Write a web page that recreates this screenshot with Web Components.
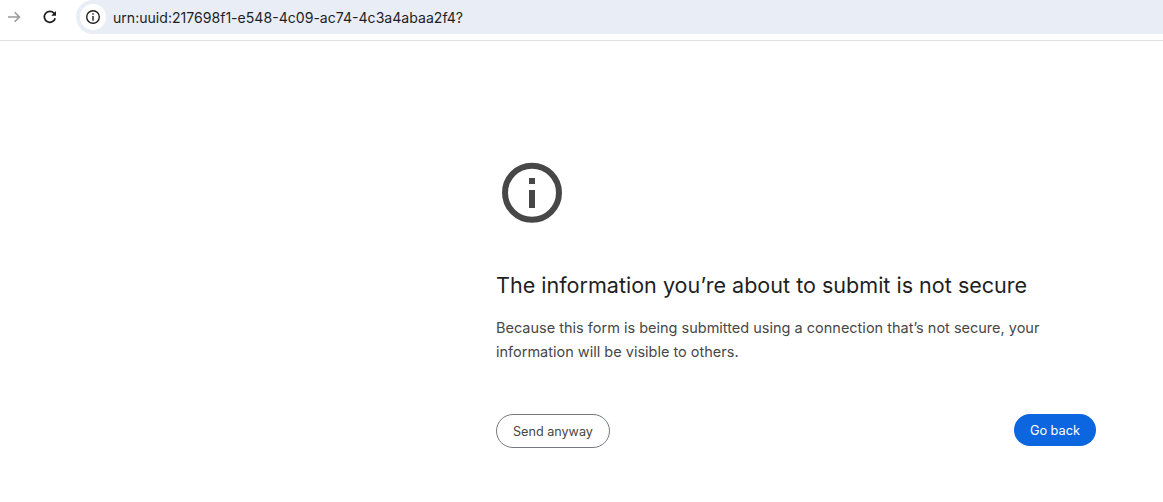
<!DOCTYPE html>
<html>
<head>
<meta charset="utf-8">
<title>Not secure</title>
<style>
  html,body{margin:0;padding:0;background:#fff;height:100%;overflow:hidden;}
  body{font-family:Inter,"Liberation Sans",sans-serif;}
</style>
</head>
<body>
<browser-toolbar url="urn:uuid:217698f1-e548-4c09-ac74-4c3a4abaa2f4?"></browser-toolbar>
<warning-page>
  <span slot="title">The information you’re about to submit is not secure</span>
  <span slot="text">Because this form is being submitted using a connection that’s not secure, your information will be visible to others.</span>
  <pill-button slot="left">Send anyway</pill-button>
  <pill-button slot="right" primary>Go back</pill-button>
</warning-page>
<script>
class BrowserToolbar extends HTMLElement {
  constructor() {
    super();
    this.attachShadow({ mode: "open" });
    this.shadowRoot.innerHTML = /*html*/ `
      <style>
        :host{display:flex;height:40px;border-bottom:1px solid #dfe0e2;background:#fff;box-sizing:content-box;}
        .nav{width:76px;display:flex;align-items:flex-start;flex:none;}
        .nav svg{display:block;margin-top:9px;flex:none;}
        .forward{margin-left:6px;}
        .reload{margin-left:20px;}
        .omni{flex:1;height:34px;background:#e9edf6;border-radius:17px 0 0 17px;display:flex;align-items:center;padding-left:4px;}
        .chip{width:26px;height:26px;border-radius:50%;background:#fff;display:flex;align-items:center;justify-content:center;flex:none;}
        .url{margin-left:7px;font-size:14.08px;color:#1f1f1f;white-space:nowrap;}
      </style>
      <div class="nav">
        <svg class="forward" width="16" height="16" viewBox="0 0 16 16" fill="none" stroke="#9a9b9d" stroke-width="1.6"><path d="M2 8h11.5M8.6 3.2 13.4 8l-4.8 4.8"/></svg>
        <svg class="reload" width="16" height="16" viewBox="0 0 16 16" fill="none"><path d="M13.2 9.2A5.5 5.5 0 1 1 11.9 4.1L13.2 5.4" stroke="#1f1f1f" stroke-width="1.7"/><path d="M14 2v4.8H9.2z" fill="#1f1f1f"/></svg>
      </div>
      <div class="omni">
        <div class="chip">
          <svg width="16" height="16" viewBox="0 0 16 16" fill="none"><circle cx="8" cy="8" r="6.3" stroke="#1f1f1f" stroke-width="1.4"/><path d="M7.3 4.3h1.4v1.4H7.3zM7.3 7h1.4v4.7H7.3z" fill="#1f1f1f"/></svg>
        </div>
        <span class="url"></span>
      </div>`;
  }
  connectedCallback() {
    this.shadowRoot.querySelector(".url").textContent = this.getAttribute("url");
  }
}
customElements.define("browser-toolbar", BrowserToolbar);

class WarningPage extends HTMLElement {
  constructor() {
    super();
    this.attachShadow({ mode: "open" });
    this.shadowRoot.innerHTML = /*html*/ `
      <style>
        :host{display:block;padding:116px 67px 0 496px;}
        svg{display:block;}
        h1{margin:40px 0 0;font-size:21.56px;line-height:32px;font-weight:400;color:#1f1f1f;white-space:nowrap;}
        p{margin:15px 0 0;font-size:14.5px;line-height:24px;color:#474747;}
        .actions{display:flex;justify-content:space-between;align-items:flex-start;margin-top:50px;}
      </style>
      <svg width="72" height="72" viewBox="0 0 72 72" fill="none">
        <circle cx="36" cy="35.7" r="27" stroke="#474747" stroke-width="6"/>
        <path d="M33 21h6v6h-6zM33 33h6v18h-6z" fill="#474747"/>
      </svg>
      <h1><slot name="title"></slot></h1>
      <p><slot name="text"></slot></p>
      <div class="actions">
        <slot name="left"></slot>
        <slot name="right"></slot>
      </div>`;
  }
}
customElements.define("warning-page", WarningPage);

class PillButton extends HTMLElement {
  constructor() {
    super();
    this.attachShadow({ mode: "open" });
    this.shadowRoot.innerHTML = /*html*/ `
      <style>
        :host{display:inline-flex;align-items:center;justify-content:center;box-sizing:border-box;height:34px;padding:0 16px;border:1px solid #767a80;border-radius:17px;font-size:12.62px;color:#474747;background:#fff;}
        :host([primary]){height:32px;border:0;border-radius:16px;background:#0b66e0;color:#fff;font-size:12.75px;}
      </style>
      <slot></slot>`;
  }
}
customElements.define("pill-button", PillButton);
</script>
</body>
</html>
